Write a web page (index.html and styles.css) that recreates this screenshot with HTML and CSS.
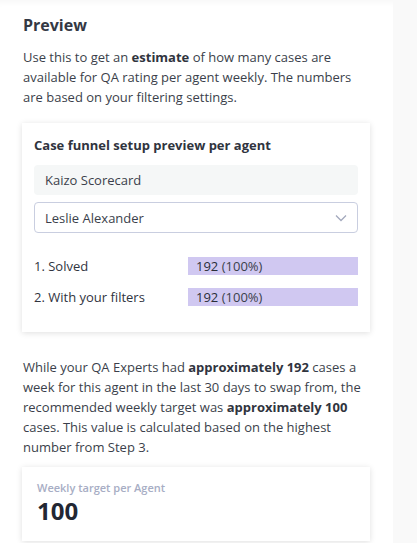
FILE: index.html
```html
<!DOCTYPE html>
<html>
<head>
    <title>Preview</title>
    <link rel="stylesheet" href="styles.css">
</head>
<body>
    <div class="layout">
        <div class="panel">
            <h2 class="title">Preview</h2>
            <p class="text">Use this to get an <b>estimate</b> of how many cases are available for QA rating per agent weekly. The numbers are based on your filtering settings.</p>

            <div class="card funnel">
                <h3 class="card-title">Case funnel setup preview per agent</h3>
                <div class="field readonly">Kaizo Scorecard</div>
                <div class="field select">
                    <span>Leslie Alexander</span>
                    <svg class="chevron" width="12" height="8" viewBox="0 0 12 8"><path d="M1 1.5l5 5 5-5" fill="none" stroke="#a3a9bd" stroke-width="1.3"/></svg>
                </div>
                <div class="steps">
                    <div class="step">
                        <span class="step-name">1. Solved</span>
                        <span class="bar" style="width: 100%"><b>192</b> (100%)</span>
                    </div>
                    <div class="step">
                        <span class="step-name">2. With your filters</span>
                        <span class="bar" style="width: 100%"><b>192</b> (100%)</span>
                    </div>
                </div>
            </div>

            <p class="text">While your QA Experts had <b>approximately 192</b> cases a week for this agent in the last 30 days to swap from, the recommended weekly target was <b>approximately 100</b> cases. This value is calculated based on the highest number from Step 3.</p>

            <div class="card target">
                <div class="target-label">Weekly target per Agent</div>
                <div class="target-value">100</div>
            </div>
        </div>
        <div class="side"></div>
    </div>
</body>
</html>
```

FILE: styles.css
```css
body {
    margin: 0;
    font-family: "Open Sans", Arial, sans-serif;
    color: #3b3f4b;
    background-color: #f9f9f9;
}

.layout {
    display: flex;
    min-height: 543px;
}

.panel {
    width: 393px;
    box-sizing: border-box;
    padding: 14px 22px 0 22px;
    background-color: #fff;
    box-shadow: inset 0 8px 8px -8px rgba(0, 0, 0, 0.06);
}

.side {
    flex: 1;
    background-color: #f9f9f9;
}

.title {
    font-size: 16px;
    font-weight: 700;
    margin: 0 0 11px 1px;
    color: #343844;
}

.text {
    font-size: 13px;
    line-height: 20px;
    margin: 0 0 0 1px;
    width: 345px;
}

.text b {
    font-weight: 700;
    color: #30343e;
}

.card {
    background-color: #fff;
    width: 348px;
    box-sizing: border-box;
    box-shadow: 0 1px 6px rgba(0, 0, 0, 0.13);
}

.funnel {
    margin: 16px 0 25px 0;
    padding: 13px 12px 26px 12px;
}

.card-title {
    font-size: 13px;
    font-weight: 700;
    margin: 0 0 11px 0;
    color: #30343e;
}

.field {
    height: 30px;
    box-sizing: border-box;
    border-radius: 4px;
    font-size: 13px;
    display: flex;
    align-items: center;
}

.readonly {
    background-color: #f5f7f7;
    padding-left: 11px;
    margin-bottom: 7px;
}

.select {
    height: 31px;
    border: 1px solid #c9cee0;
    padding: 1px 10px 0 10px;
    justify-content: space-between;
}

.steps {
    margin-top: 24px;
    display: flex;
    flex-direction: column;
    gap: 13px;
}

.step {
    display: flex;
    align-items: center;
    font-size: 13px;
    font-weight: 500;
    color: #30343e;
}

.step-name {
    width: 154px;
    flex-shrink: 0;
}

.bar {
    display: block;
    height: 18px;
    line-height: 18px;
    background-color: #d0c8f1;
    padding-left: 8px;
    box-sizing: border-box;
    font-size: 13px;
    font-weight: 400;
    color: #3b3f4b;
}

.bar b {
    font-weight: 500;
    color: #2a2e38;
}

.target {
    margin-top: 10px;
    padding: 13px 15px 14px 15px;
}

.target-label {
    font-size: 11px;
    font-weight: 600;
    color: #a7adc4;
}

.target-value {
    font-size: 24px;
    font-weight: 700;
    color: #232733;
    line-height: 32px;
}
```
